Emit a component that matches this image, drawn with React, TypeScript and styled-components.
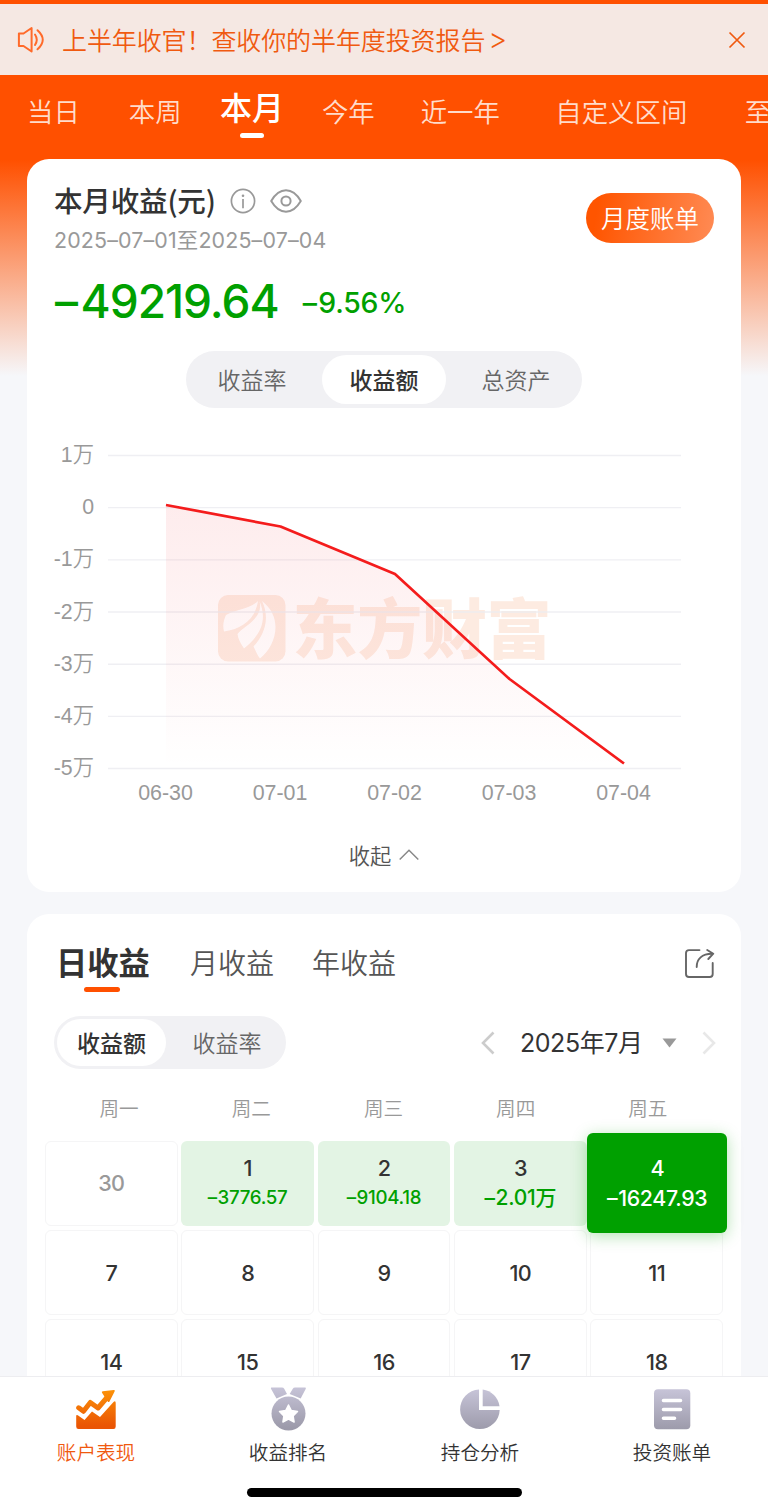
import React from 'react';
import styled, { createGlobalStyle, css } from 'styled-components';

const sans = `Inter, "Noto Sans CJK SC", sans-serif`;
const cjk = `"Noto Sans CJK SC", sans-serif`;
const arial = `"Liberation Sans", "Noto Sans CJK SC", sans-serif`;

const GlobalStyle = createGlobalStyle`
  * { box-sizing: border-box; }
  body { margin: 0; background: #f6f7fa; font-family: ${sans}; color: #333; }
`;

const Page = styled.div`
  width: 768px;
  height: 1511px;
  display: flex;
  flex-direction: column;
  overflow: hidden;
  background: linear-gradient(180deg, #ff5000 0, #ff5000 160px, #f6f7fa 376px);
`;

const Notice = styled.div`
  flex: none;
  display: flex;
  align-items: center;
  height: 71px;
  margin-top: 4px;
  padding: 0 22px 0 17px;
  background: #f5e8e3;
  color: #f05a10;
`;

const NoticeText = styled.div`
  flex: 1;
  display: flex;
  align-items: center;
  height: 36px;
  margin-left: 17px;
  padding-bottom: 2px;
  font: 350 25px/34px ${cjk};
  letter-spacing: -0.1px;
  white-space: nowrap;
`;

const NoticeArrow = styled.span`
  margin-left: 3px;
  font: 300 29px/34px ${sans};
`;

const PeriodTabs = styled.nav`
  flex: none;
  display: flex;
  height: 84px;
  padding-left: 27px;
  overflow: hidden;
`;

const PeriodTab = styled.div<{ $gap: number; $active?: boolean }>`
  flex: none;
  margin-left: ${p => p.$gap}px;
  font: 350 26.4px/71px ${cjk};
  color: #ffdccb;
  ${p => p.$active && css`
    font-weight: 500;
    font-size: 32px;
    line-height: 62px;
    color: #fff;
    &::after {
      content: '';
      display: block;
      width: 24px;
      height: 5px;
      margin: -4px auto 0;
      border-radius: 3px;
      background: #fff;
    }
  `}
`;

const Main = styled.main`
  flex: 1;
  min-height: 0;
  overflow: hidden;
  padding: 0 27px;
`;

const Card = styled.section`
  background: #fff;
  border-radius: 22px;
  padding: 22px 27px 0;
  margin-bottom: 22px;
`;

const SummaryHead = styled.div`
  display: flex;
  justify-content: space-between;
`;

const TitleRow = styled.div`
  display: flex;
  align-items: center;
  height: 40px;
`;

const Title = styled.h1`
  margin: 0 14px 0 0;
  padding-bottom: 2px;
  font: 500 28.6px/38px ${cjk};
  letter-spacing: -0.25px;
  color: #333;
`;

const EyeSlot = styled.span`
  display: flex;
  margin-left: 13px;
`;

const DateRange = styled.div`
  margin-top: 5px;
  font: 400 21.4px/28px ${sans};
  letter-spacing: 0.15px;
  color: #999;
`;

const BillButton = styled.button`
  width: 128px;
  height: 50px;
  margin-top: 12px;
  padding: 0;
  border: 0;
  border-radius: 25px;
  background: linear-gradient(100deg, #ff5500 10%, #ff8850 95%);
  color: #fff;
  font: 350 24.5px/50px ${cjk};
`;

const Amounts = styled.div`
  display: flex;
  align-items: center;
  height: 56px;
  margin-top: 19px;
  color: #00a000;
  font-weight: 500;
  line-height: 56px;
`;

const Amount = styled.span`
  padding-left: 1px;
  font-size: 46px;
  letter-spacing: -1px;
`;

const Rate = styled.span`
  margin-left: 24px;
  padding-top: 3px;
  font-size: 28.4px;
  letter-spacing: -0.2px;
`;

const Dash = styled.span<{ $gap: number }>`
  margin-right: ${p => p.$gap}px;
`;

const Segmented = styled.div<{ $w: number; $h: number; $pad: number }>`
  display: flex;
  width: ${p => p.$w}px;
  height: ${p => p.$h}px;
  padding: ${p => p.$pad}px;
  border-radius: ${p => p.$h / 2}px;
  background: #f1f1f4;
`;

const Segment = styled.div<{ $active?: boolean; $w: number; $left?: number; $right?: number }>`
  flex: none;
  display: flex;
  align-items: center;
  justify-content: center;
  width: ${p => p.$w}px;
  padding: 0 ${p => p.$right ?? 0}px 2px ${p => p.$left ?? 0}px;
  border-radius: 26px;
  font: 350 23px/34px ${cjk};
  color: #666;
  ${p => p.$active && css`
    background: #fff;
    font-weight: 500;
    color: #333;
  `}
`;

const SummarySwitch = styled.div`
  display: flex;
  justify-content: center;
  margin-top: 22px;
`;

const ChartBox = styled.div`
  height: 412px;
  margin: 0 -27px;
  svg { display: block; }
`;

const Collapse = styled.div`
  display: flex;
  align-items: center;
  justify-content: center;
  gap: 8px;
  height: 72px;
  padding-bottom: 2px;
  font: 350 21.3px/32px ${cjk};
  color: #555;
`;

const ReportTabs = styled.div`
  display: flex;
  align-items: flex-start;
  height: 80px;
  padding: 8px 0 0 2px;
`;

const ReportTab = styled.div<{ $active?: boolean; $gap?: number }>`
  margin-left: ${p => p.$gap ?? 0}px;
  font: 350 28px/36px ${cjk};
  color: #555;
  ${p => p.$active && css`
    font-weight: 700;
    font-size: 31.3px;
    color: #333;
    &::after {
      content: '';
      display: block;
      width: 36px;
      height: 5px;
      margin: 7px 0 0 28px;
      border-radius: 3px;
      background: #ff5000;
    }
  `}
`;

const ShareSlot = styled.div`
  display: flex;
  margin: 4px -1px 0 auto;
`;

const Toolbar = styled.div`
  display: flex;
  align-items: center;
  justify-content: space-between;
  height: 53px;
`;

const MonthPicker = styled.div`
  display: flex;
  align-items: center;
  margin-right: -2px;
  color: #333;
`;

const MonthLabel = styled.span`
  width: 123px;
  margin: 0 19px 0 25px;
  font: 400 25px/36px ${sans};
  letter-spacing: -0.45px;
  white-space: nowrap;
`;

const NextSlot = styled.span`
  display: flex;
  margin-left: 25px;
`;

const Weekdays = styled.div`
  display: grid;
  grid-template-columns: repeat(5, 132.2px);
  height: 71.5px;
  margin-left: -1px;
  font: 350 19.6px/78px ${cjk};
  text-align: center;
  color: #999;
`;

const Calendar = styled.div`
  display: grid;
  grid-template-columns: repeat(5, 1fr);
  grid-auto-rows: 85.5px;
  gap: 3.8px;
  margin: 0 -9px;
`;

type Tone = 'plain' | 'muted' | 'loss' | 'selected';

const Day = styled.div<{ $tone: Tone }>`
  display: flex;
  flex-direction: column;
  align-items: center;
  justify-content: center;
  border-radius: 6px;
  border: 1.5px solid #f5f5f6;
  font-size: 21.6px;
  font-weight: 500;
  line-height: 30px;
  letter-spacing: -0.6px;
  color: ${p => (p.$tone === 'muted' ? '#999' : '#333')};
  ${p => p.$tone === 'loss' && css`
    border: 0;
    background: #e3f4e4;
  `}
  ${p => p.$tone === 'selected' && css`
    z-index: 1;
    margin: -7.5px -4px -7px -3px;
    border: 0;
    background: #00a000;
    color: #fff;
    box-shadow: 0 3px 16px rgba(0, 160, 0, 0.3);
  `}
`;

const DayValue = styled.span<{ $size: number; $light?: boolean }>`
  font-size: ${p => p.$size}px;
  letter-spacing: -0.3px;
  color: ${p => (p.$light ? '#fff' : '#00a000')};
`;

const BottomBar = styled.footer`
  flex: none;
  height: 135px;
  border-top: 1.5px solid #ededf0;
  background: #fff;
`;

const BottomTabs = styled.div`
  display: grid;
  grid-template-columns: repeat(4, 1fr);
  height: 110.5px;
`;

const BottomTab = styled.div<{ $active?: boolean }>`
  display: flex;
  flex-direction: column;
  align-items: center;
  padding-top: 11px;
  font: 350 19.6px/30px ${cjk};
  color: ${p => (p.$active ? '#f0590f' : '#333')};
  svg { margin-bottom: 7px; }
`;

const MedalSlot = styled.span`
  display: flex;
  height: 49px;
  margin-top: -2px;
  margin-bottom: 2px;
`;

const HomeIndicator = styled.div`
  width: 275px;
  height: 9px;
  margin: 0 auto;
  border-radius: 5px;
  background: #000;
`;

const SpeakerIcon = () => (
  <svg width="28" height="28" viewBox="0 0 28 28" fill="none" stroke="#ff6a2a" strokeWidth="2" strokeLinejoin="round" strokeLinecap="round">
    <path d="M1.900 7.500H6.500L14.600 2V25.500L6.500 20H1.900Z" />
    <path d="M18 8.500Q21.500 13.700 18 19M20.500 4.200Q31 13.700 20.500 23.300" />
  </svg>
);

const CloseIcon = () => (
  <svg width="18" height="18" viewBox="0 0 18 18" stroke="#f05a10" strokeWidth="1.700">
    <path d="M1.500 1.500L16.500 16.500M16.500 1.500L1.500 16.500" />
  </svg>
);

const InfoIcon = () => (
  <svg width="26" height="26" viewBox="0 0 26 26" fill="none" stroke="#999" strokeWidth="1.700">
    <circle cx="13" cy="13" r="11.600" />
    <path d="M13 11V20.300" />
    <circle cx="13" cy="7.700" r="1.300" fill="#999" stroke="none" />
  </svg>
);

const EyeIcon = () => (
  <svg width="34" height="26" viewBox="0 0 34 26" fill="none" stroke="#999" strokeWidth="2">
    <path d="M2.200 13C6 6.500 11.200 2.300 17 2.300S28 6.500 31.800 13C28 19.500 22.800 23.700 17 23.700S6 19.500 2.200 13Z" strokeLinejoin="round" />
    <circle cx="17" cy="13" r="4.600" />
  </svg>
);

const ShareIcon = () => (
  <svg width="31" height="31" viewBox="0 0 31 31" fill="none" stroke="#666" strokeWidth="1.900" strokeLinecap="round" strokeLinejoin="round">
    <path d="M15.500 2.100H5Q2 2.100 2 5V26Q2 29 5 29H25.700Q28.700 29 28.700 26V15" />
    <path d="M12.700 19C12.700 11 18 6 28 5.800" />
    <path d="M23.200 2L29.300 5.700L24.300 11" />
  </svg>
);

const points: [string, number, number][] = [
  ['06-30', 139, 97],
  ['07-01', 253.5, 118.5],
  ['07-02', 368, 166],
  ['07-03', 482.5, 271],
  ['07-04', 597, 355.5],
];
const gridLabels = ['1万', '0', '-1万', '-2万', '-3万', '-4万', '-5万'];

const ProfitChart = () => {
  const line = points.map(([, x, y]) => `${x},${y}`).join(' ');
  return (
    <svg width="714" height="412" viewBox="0 0 714 412">
      <defs>
        <linearGradient id="area" x1="0" y1="97" x2="0" y2="360" gradientUnits="userSpaceOnUse">
          <stop offset="0" stopColor="#f01e28" stopOpacity="0.085" />
          <stop offset="1" stopColor="#f01e28" stopOpacity="0" />
        </linearGradient>
      </defs>
      <g fill="#fdebe1">
        <rect x="191" y="187" width="67.500" height="66.500" rx="10" />
        <g fill="#fff">
          <path d="M231 193C223 201 207 202 199 207C196.500 212 195.500 218 197 223.500C213 221 228 213 231 193Z" />
          <path d="M232.500 193C237 211 216 218 210.500 226C211 231 214 236 217 240.500C227 232 243 218 232.500 193Z" />
          <path d="M235 193C244 212 236 228 226.500 238.500C229 243 230 247 233 250.500C249 238 257 210 235 193Z" />
        </g>
        <text x="265.500" y="245" fontFamily="Noto Sans CJK SC" fontWeight="900" fontSize="65" letterSpacing="-0.3">东方财富</text>
      </g>
      {gridLabels.map((label, i) => (
        <g key={label}>
          <path d={`M81 ${47.5 + i * 52.17}H654`} stroke="#ececf1" strokeOpacity="0.85" strokeWidth="1.400" />
          <text x="67" y={54 + i * 52.17} textAnchor="end" fontFamily={arial} fontSize="21.300" fontWeight="350" fill="#999">{label}</text>
        </g>
      ))}
      <polygon points={`139,360 ${line} 597,360`} fill="url(#area)" />
      <polyline points={line} fill="none" stroke="#f41c1c" strokeWidth="2.700" strokeLinejoin="round" />
      {points.map(([label, x]) => (
        <text key={label} x={x - 0.5} y="392" textAnchor="middle" fontFamily={arial} fontSize="21.400" fill="#999">{label}</text>
      ))}
    </svg>
  );
};

const Chevron = ({ dir, color }: { dir: 'left' | 'right'; color: string }) => (
  <svg width="14" height="24" viewBox="0 0 14 24" fill="none" stroke={color} strokeWidth="2.600">
    <path d={dir === 'left' ? 'M12.500 1.500L2 12L12.500 22.500' : 'M1.500 1.500L12 12L1.500 22.500'} />
  </svg>
);

const TrendIcon = () => (
  <svg width="42" height="42" viewBox="0 0 42 42">
    <defs>
      <linearGradient id="hot" x1="0" y1="3" x2="0" y2="38" gradientUnits="userSpaceOnUse">
        <stop offset="0" stopColor="#fb9008" />
        <stop offset="1" stopColor="#ea5504" />
      </linearGradient>
    </defs>
    <path d="M3.700 19.800L8.500 23.300L15.300 14.500L23 20L32 9.500" fill="none" stroke="url(#hot)" strokeWidth="5" strokeLinecap="round" strokeLinejoin="round" />
    <path d="M27 4.800Q26.300 3.500 27.800 3.300L38.700 2Q40.400 1.900 39.600 3.400L34.500 13.500Q33.700 14.500 32.700 13.500Z" fill="url(#hot)" />
    <path d="M1.200 28Q1.200 26.300 2.800 27.300L9.500 32L17 23.500L25 29L38.500 14Q40.700 12.300 40.700 15V38.500Q40.700 41 38.500 41H3.500Q1.200 41 1.200 38.500Z" fill="url(#hot)" />
  </svg>
);

const CoolGradient = ({ id }: { id: string }) => (
  <defs>
    <linearGradient id={id} x1="0" y1="0" x2="0" y2="42" gradientUnits="userSpaceOnUse">
      <stop offset="0" stopColor="#c8c5d9" />
      <stop offset="1" stopColor="#9c9aaa" />
    </linearGradient>
  </defs>
);

const MedalIcon = () => (
  <svg width="42" height="46" viewBox="0 0 42 46">
    <CoolGradient id="medal" />
    <path d="M4.500 1.500H15Q16.500 1.500 17.200 2.800L20 8L9.500 12.500Q8 10 4 2.800Q3.500 1.500 4.500 1.500Z M38 1.500H28Q26.500 1.500 25.800 2.800L22.700 8L33.700 12.500Q35 10 38.800 2.800Q39.200 1.500 38 1.500Z" fill="url(#medal)" />
    <circle cx="21.500" cy="27.500" r="17" fill="url(#medal)" />
    <path d="M21.500 19L24.300 24.500L30.500 25.500L26.100 29.900L27.100 36L21.500 33.200L15.900 36L16.900 29.900L12.500 25.500L18.700 24.500Z" fill="#fff" stroke="#fff" strokeWidth="1.500" strokeLinejoin="round" />
  </svg>
);

const PieIcon = () => (
  <svg width="42" height="42" viewBox="0 0 42 42">
    <CoolGradient id="pie" />
    <path d="M20 1.500A19.800 19.800 0 1 0 40.700 22H20Z" fill="url(#pie)" />
    <path d="M23.700 1.500A19.500 19.500 0 0 1 40.500 18.300H23.700Z" fill="url(#pie)" />
  </svg>
);

const BillIcon = () => (
  <svg width="42" height="42" viewBox="0 0 42 42">
    <CoolGradient id="bill" />
    <rect x="3" y="1.300" width="36.300" height="40" rx="4" fill="url(#bill)" />
    <path d="M12.500 12.500H29.500M12.500 21.500H29.500M12.500 30.300H23.500" stroke="#fff" strokeWidth="3.600" strokeLinecap="round" />
  </svg>
);

const periods = [
  { label: '当日', gap: 0 },
  { label: '本周', gap: 49 },
  { label: '本月', gap: 38.5, active: true },
  { label: '今年', gap: 37.8 },
  { label: '近一年', gap: 46 },
  { label: '自定义区间', gap: 55.5 },
  { label: '至', gap: 57.5 },
];

const days: { day: string; value?: string; size?: number; tone: Tone }[] = [
  { day: '30', tone: 'muted' },
  { day: '1', value: '3776.57', size: 18.7, tone: 'loss' },
  { day: '2', value: '9104.18', size: 18.7, tone: 'loss' },
  { day: '3', value: '2.01万', size: 21, tone: 'loss' },
  { day: '4', value: '16247.93', size: 21.3, tone: 'selected' },
  ...['7', '8', '9', '10', '11', '14', '15', '16', '17', '18'].map(day => ({ day, tone: 'plain' as Tone })),
];

export default function App() {
  return (
    <>
      <GlobalStyle />
      <Page>
        <Notice>
          <SpeakerIcon />
          <NoticeText>上半年收官！查收你的半年度投资报告<NoticeArrow>&gt;</NoticeArrow></NoticeText>
          <CloseIcon />
        </Notice>
        <PeriodTabs>
          {periods.map(p => (
            <PeriodTab key={p.label} $gap={p.gap} $active={p.active}>{p.label}</PeriodTab>
          ))}
        </PeriodTabs>
        <Main>
          <Card>
            <SummaryHead>
              <div>
                <TitleRow>
                  <Title>本月收益(元)</Title>
                  <InfoIcon />
                  <EyeSlot><EyeIcon /></EyeSlot>
                </TitleRow>
                <DateRange>2025–07–01至2025–07–04</DateRange>
              </div>
              <BillButton>月度账单</BillButton>
            </SummaryHead>
            <Amounts>
              <Amount><Dash $gap={3.5}>–</Dash>49219.64</Amount>
              <Rate><Dash $gap={1.5}>–</Dash>9.56%</Rate>
            </Amounts>
            <SummarySwitch>
              <Segmented $w={396} $h={57} $pad={4}>
                <Segment $w={132} $right={8}>收益率</Segment>
                <Segment $w={124} $active>收益额</Segment>
                <Segment $w={132} $left={8}>总资产</Segment>
              </Segmented>
            </SummarySwitch>
            <ChartBox><ProfitChart /></ChartBox>
            <Collapse>
              收起
              <svg width="20" height="12" viewBox="0 0 20 12" fill="none" stroke="#888" strokeWidth="1.500">
                <path d="M0.700 10.500L10 1.300L19.300 10.500" />
              </svg>
            </Collapse>
          </Card>
          <Card>
            <ReportTabs>
              <ReportTab $active>日收益</ReportTab>
              <ReportTab $gap={40}>月收益</ReportTab>
              <ReportTab $gap={38}>年收益</ReportTab>
              <ShareSlot><ShareIcon /></ShareSlot>
            </ReportTabs>
            <Toolbar>
              <Segmented $w={232} $h={53} $pad={3}>
                <Segment $w={109} $active>收益额</Segment>
                <Segment $w={117} $left={5}>收益率</Segment>
              </Segmented>
              <MonthPicker>
                <Chevron dir="left" color="#ccc" />
                <MonthLabel>2025年7月</MonthLabel>
                <svg width="15" height="10" viewBox="0 0 15 10"><path d="M0.500 0.500H14.500L7.500 9.500Z" fill="#999" /></svg>
                <NextSlot><Chevron dir="right" color="#e8e8e8" /></NextSlot>
              </MonthPicker>
            </Toolbar>
            <Weekdays>
              {['周一', '周二', '周三', '周四', '周五'].map(d => <span key={d}>{d}</span>)}
            </Weekdays>
            <Calendar>
              {days.map(d => (
                <Day key={d.day} $tone={d.tone}>
                  <span>{d.day}</span>
                  {d.value && (
                    <DayValue $size={d.size ?? 19} $light={d.tone === 'selected'}>
                      <Dash $gap={0.8}>–</Dash>{d.value}
                    </DayValue>
                  )}
                </Day>
              ))}
            </Calendar>
          </Card>
        </Main>
        <BottomBar>
          <BottomTabs>
            <BottomTab $active><TrendIcon />账户表现</BottomTab>
            <BottomTab><MedalSlot><MedalIcon /></MedalSlot>收益排名</BottomTab>
            <BottomTab><PieIcon />持仓分析</BottomTab>
            <BottomTab><BillIcon />投资账单</BottomTab>
          </BottomTabs>
          <HomeIndicator />
        </BottomBar>
      </Page>
    </>
  );
}
